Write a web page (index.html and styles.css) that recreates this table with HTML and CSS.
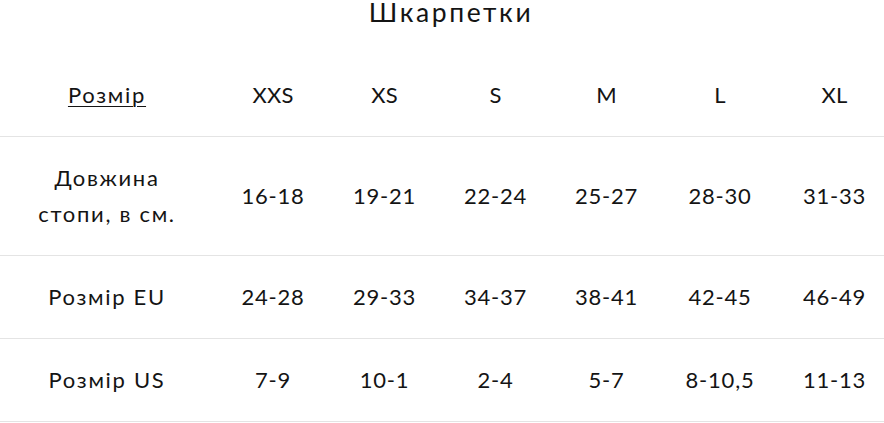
FILE: index.html
```html
<!DOCTYPE html>
<html lang="uk">
<head>
<meta charset="utf-8">
<title>Шкарпетки</title>
<link rel="stylesheet" href="styles.css">
</head>
<body>
<div class="page">
  <h1 class="title">Шкарпетки</h1>
  <table class="sizes">
    <colgroup>
      <col class="c-label">
      <col class="c-a">
      <col class="c-b">
      <col class="c-a2">
      <col class="c-b">
      <col class="c-l">
      <col class="c-xl">
    </colgroup>
    <tr class="head">
      <th class="label"><span class="u">Розмір</span></th>
      <th>XXS</th><th>XS</th><th>S</th><th>M</th><th>L</th><th>XL</th>
    </tr>
    <tr>
      <td class="label">Довжина<br>стопи, в см.</td>
      <td>16-18</td><td>19-21</td><td>22-24</td><td>25-27</td><td>28-30</td><td>31-33</td>
    </tr>
    <tr>
      <td class="label">Розмір EU</td>
      <td>24-28</td><td>29-33</td><td>34-37</td><td>38-41</td><td>42-45</td><td>46-49</td>
    </tr>
    <tr>
      <td class="label">Розмір US</td>
      <td>7-9</td><td>10-1</td><td>2-4</td><td>5-7</td><td>8-10,5</td><td>11-13</td>
    </tr>
  </table>
</div>
</body>
</html>
```
FILE: styles.css
```css
html, body {
  margin: 0;
  padding: 0;
  background: #fff;
}
body {
  font-family: Lato, "Open Sans", "Liberation Sans", sans-serif;
  color: #141414;
  overflow: hidden;
}
.page {
  width: 888px;
}
.title {
  margin: 0;
  padding-left: 9px;
  font-size: 26.5px;
  line-height: 24px;
  font-weight: 400;
  text-align: center;
  width: 884px;
  letter-spacing: 2.6px;
}
.sizes {
  margin-top: 30px;
  width: 888px;
  table-layout: fixed;
  border-collapse: collapse;
  font-size: 22px;
  line-height: 36px;
}
.c-label { width: 214px; }
.c-a { width: 118px; }
.c-b { width: 105px; }
.c-a2 { width: 117px; }
.c-l { width: 122px; }
.c-xl { width: 107px; }
.sizes th,
.sizes td {
  padding: 23px 0;
  text-align: center;
  vertical-align: middle;
  font-weight: 400;
  border-bottom: 1px solid #e4e4e4;
  white-space: nowrap;
  letter-spacing: 0.8px;
}
.sizes .head th {
  letter-spacing: 0.2px;
}
.sizes .label,
.sizes .head .label {
  letter-spacing: 1.7px;
}
.u {
  text-decoration: underline;
  text-underline-offset: 3px;
  text-decoration-thickness: 1px;
}
```
